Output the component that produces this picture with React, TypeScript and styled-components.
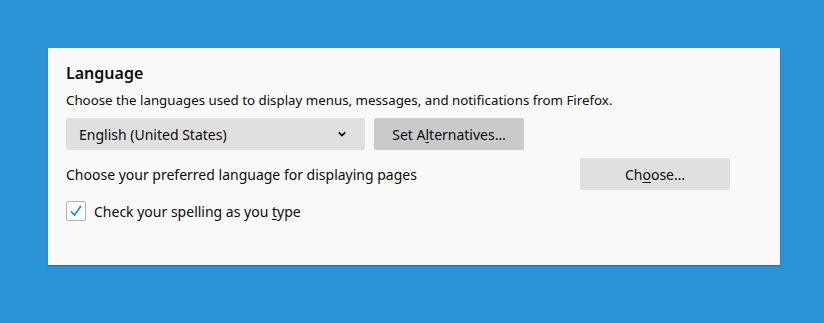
import React from "react";
import styled, { createGlobalStyle } from "styled-components";

const Global = createGlobalStyle`
  html, body {
    margin: 0;
    padding: 0;
    background: #2a93d5;
  }
  body {
    font-family: "Noto Sans", "Open Sans", sans-serif;
    color: #0c0c0d;
  }
`;

const Stage = styled.div`
  width: 824px;
  height: 323px;
  padding: 48px 44px 58px 48px;
  box-sizing: border-box;
`;

const Panel = styled.section`
  background: #f9f9fa;
  height: 217px;
  box-sizing: border-box;
  padding: 14px 50px 0 18px;
  box-shadow: 0 1px 1px rgba(0, 0, 0, 0.25);
`;

const Title = styled.h2`
  margin: 0;
  font-size: 16px;
  font-weight: 600;
  line-height: 22px;
`;

const Text = styled.p`
  margin: 6px 0 0;
  font-size: 13.3px;
  line-height: 20px;
`;

const Row = styled.div<{ $spread?: boolean }>`
  display: flex;
  align-items: center;
  gap: 9px;
  justify-content: ${(p) => (p.$spread ? "space-between" : "flex-start")};
  margin-top: 8px;
`;

const Select = styled.div`
  width: 299px;
  height: 32px;
  box-sizing: border-box;
  background: #e0e0e1;
  border-radius: 2px;
  display: flex;
  align-items: center;
  justify-content: space-between;
  padding: 0 18px 0 13px;
  font-size: 14px;
`;

const Button = styled.button<{ $hover?: boolean }>`
  width: 150px;
  height: 32px;
  border: none;
  border-radius: 2px;
  background: ${(p) => (p.$hover ? "#cacaca" : "#e0e0e1")};
  font-family: inherit;
  font-size: 14px;
  color: #0c0c0d;
  padding: 0;
`;

const Label = styled.span`
  font-size: 14px;
`;

const Check = styled.label`
  display: flex;
  align-items: center;
  gap: 8px;
  margin-top: 11px;
  font-size: 14px;
`;

const Box = styled.span`
  width: 20px;
  height: 20px;
  box-sizing: border-box;
  border: 1px solid #b1b1b3;
  border-radius: 2px;
  background: #fff;
  display: flex;
  align-items: center;
  justify-content: center;
`;

const U = styled.u`
  text-decoration-thickness: 1px;
  text-underline-offset: 2px;
`;

export default function App() {
  return (
    <>
      <Global />
      <Stage>
        <Panel>
          <Title>Language</Title>
          <Text>
            Choose the languages used to display menus, messages, and notifications from Firefox.
          </Text>
          <Row>
            <Select>
              <span>English (United States)</span>
              <svg width="10" height="10" viewBox="0 0 10 10">
                <path d="M1.8 3.3 L5 6.5 L8.2 3.3" fill="none" stroke="#0c0c0d" strokeWidth="1.7" />
              </svg>
            </Select>
            <Button $hover>
              Set A<U>l</U>ternatives…
            </Button>
          </Row>
          <Row $spread>
            <Label>Choose your preferred language for displaying pages</Label>
            <Button>
              Ch<U>o</U>ose…
            </Button>
          </Row>
          <Check>
            <Box>
              <svg width="16" height="16" viewBox="0 0 16 16">
                <path d="M3 8.5 L6.5 12 L13 3" fill="none" stroke="#0a84ff" strokeWidth="1.6" />
              </svg>
            </Box>
            <span>
              Check your spelling as you <U>t</U>ype
            </span>
          </Check>
        </Panel>
      </Stage>
    </>
  );
}
